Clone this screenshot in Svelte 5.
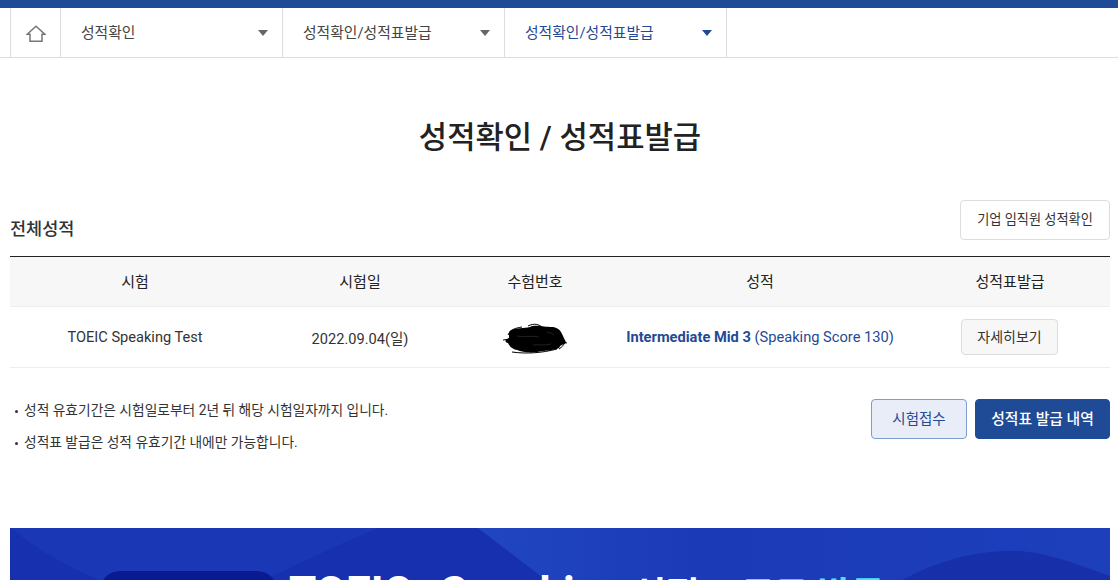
<script>
  const navItems = [
    { label: '성적확인', width: 222 },
    { label: '성적확인/성적표발급', width: 222 },
    { label: '성적확인/성적표발급', width: 223, active: true }
  ];
  const columns = ['시험', '시험일', '수험번호', '성적', '성적표발급'];
  const notes = [
    '성적 유효기간은 시험일로부터 2년 뒤 해당 시험일자까지 입니다.',
    '성적표 발급은 성적 유효기간 내에만 가능합니다.'
  ];
</script>

<div class="page">
  <div class="topbar"></div>

  <nav class="nav">
    <div class="home">
      <svg width="20" height="18" viewBox="0 0 20 18" fill="none" stroke="#777" stroke-width="1.5">
        <path d="M1.2 9.2 10 1.2l8.8 8H16v7.1H4V9.2z" />
      </svg>
    </div>
    {#each navItems as item}
      <div class="nav-item" class:active={item.active} style="width: {item.width}px">
        <span>{item.label}</span>
        <i class="caret"></i>
      </div>
    {/each}
  </nav>

  <h1>성적확인 / 성적표발급</h1>

  <div class="section-head">
    <h2>전체성적</h2>
    <button class="btn btn-outline">기업 임직원 성적확인</button>
  </div>

  <table>
    <thead>
      <tr>
        {#each columns as col}
          <th>{col}</th>
        {/each}
      </tr>
    </thead>
    <tbody>
      <tr>
        <td>TOEIC Speaking Test</td>
        <td>2022.09.04(일)</td>
        <td>
          <svg class="scribble" width="64" height="32" viewBox="0 0 64 32">
            <path d="M8 7C16 4 24 6 29 3c8-1 12 1 21 1 6 1 8 4 10 9 1 3 3 5 3 7-3 2-5 1-7 5-6 3-14 2-22 4-8 1-15 0-20-2C8 26 6 22 5 20 2 19 1 17 6 15 6 11 5 9 8 7z" fill="#000" />
            <path d="M0 17c20-3 42-4 64 3M9 29c14 2 30 1 45-3M25 3c6-3 11-2 15 2M5 12c3-6 8-7 14-8M56 26c3-2 5-4 6-7" fill="none" stroke="#000" stroke-width="1" />
            <path d="M14 13c8 2 14-1 22 1M30 22c6-1 12 1 18-1M44 9c3 1 5 1 7 3" fill="none" stroke="#2a2a2a" stroke-width="0.8" />
          </svg>
        </td>
        <td class="score"><b>Intermediate Mid 3</b> (Speaking Score 130)</td>
        <td><button class="btn btn-detail">자세히보기</button></td>
      </tr>
    </tbody>
  </table>

  <div class="foot">
    <ul>
      {#each notes as note}
        <li>{note}</li>
      {/each}
    </ul>
    <div class="actions">
      <button class="btn btn-light">시험접수</button>
      <button class="btn btn-primary">성적표 발급 내역</button>
    </div>
  </div>

  <div class="banner">
    <svg class="banner-bg" width="1100" height="52" viewBox="0 0 1100 52">
      <defs>
        <linearGradient id="sweep" x1="0" x2="1" y1="0" y2="0">
          <stop offset="0" stop-color="#2146c2" />
          <stop offset="0.35" stop-color="#1b3ab8" />
          <stop offset="1" stop-color="#1d3fbc" />
        </linearGradient>
      </defs>
      <path d="M1 0H368C320 20 285 38 258 50L250 52H90C55 38 25 20 1 0z" fill="#1a38b6" />
      <path d="M468 0 536 52H1100V0z" fill="url(#sweep)" />
      <path d="M892 52C930 32 965 23 1001 23c36 0 66 14 99 25v4z" fill="#172fa9" />
    </svg>
    <div class="banner-pill"></div>
    <div class="banner-text">
      <span class="latin">TOEIC Speaking</span>
      <span>성적표</span>
      <em>무료 발급</em>
    </div>
  </div>
</div>

<style>
  :global(body) {
    overflow: hidden;
    background: #fff;
  }
  .page {
    width: 1118px;
    height: 580px;
    overflow: hidden;
    font-family: Roboto, "Noto Sans CJK KR", sans-serif;
    color: #222;
  }
  .topbar {
    height: 8px;
    background: #1f4a96;
  }
  .nav {
    display: flex;
    height: 49px;
    padding-left: 10px;
    border-bottom: 1px solid #ddd;
  }
  .home {
    width: 50px;
    display: flex;
    align-items: center;
    justify-content: center;
    border-left: 1px solid #ddd;
    box-sizing: border-box;
    padding-top: 2px;
  }
  .nav-item {
    display: flex;
    align-items: center;
    justify-content: space-between;
    box-sizing: border-box;
    padding: 0 14px 2px 20px;
    border-left: 1px solid #ddd;
    font-size: 14.8px;
    color: #444;
  }
  .nav-item:last-child {
    border-right: 1px solid #ddd;
  }
  .nav-item.active {
    color: #1f4a96;
  }
  .caret {
    width: 0;
    height: 0;
    border-left: 5px solid transparent;
    border-right: 5px solid transparent;
    border-top: 6px solid #666;
    margin-top: 2px;
  }
  .active .caret {
    border-top-color: #1f4a96;
  }
  h1 {
    margin: 56px 0 0;
    height: 47px;
    line-height: 47px;
    text-align: center;
    font-size: 30.8px;
    font-weight: 500;
    color: #222;
    width: 1120px;
  }
  .section-head {
    display: flex;
    align-items: center;
    justify-content: space-between;
    margin: 39px 8px 0 10px;
    height: 40px;
  }
  h2 {
    margin: 14px 0 0;
    font-size: 17.5px;
    font-weight: 500;
    color: #333;
  }
  .btn {
    font-family: inherit;
    box-sizing: border-box;
    border-radius: 4px;
    cursor: pointer;
    padding: 0 0 4px;
  }
  .btn-outline {
    width: 150px;
    height: 40px;
    background: #fff;
    border: 1px solid #ddd;
    font-size: 13.2px;
    color: #333;
  }
  table {
    width: 1100px;
    margin: 16px 0 0 10px;
    border-collapse: collapse;
    table-layout: fixed;
    border-top: 1px solid #222;
  }
  th {
    height: 47px;
    padding: 0 0 2px;
    background: #f7f7f7;
    border-bottom: 1px solid #eee;
    font-size: 15px;
    font-weight: 400;
    color: #222;
  }
  th:nth-child(1) { width: 250px; }
  th:nth-child(2) { width: 200px; }
  th:nth-child(3) { width: 150px; }
  th:nth-child(4) { width: 300px; }
  td {
    height: 60px;
    padding: 0;
    text-align: center;
    font-size: 14.6px;
    color: #333;
    border-bottom: 1px solid #eee;
  }
  .scribble {
    display: block;
    margin: 3px auto 0;
  }
  .score {
    color: #1f4a96;
    font-size: 14.65px;
  }
  .score b {
    font-weight: 700;
  }
  .btn-detail {
    width: 97px;
    height: 36px;
    background: #f7f7f7;
    border: 1px solid #ddd;
    font-size: 14px;
    color: #333;
    display: block;
    margin: 0 0 0 51px;
    padding-bottom: 2px;
  }
  .foot {
    display: flex;
    justify-content: space-between;
    align-items: flex-start;
    margin: 31px 8px 0 10px;
  }
  ul {
    list-style: none;
    margin: 0;
    padding: 0;
    font-size: 13.75px;
    color: #333;
  }
  li {
    height: 32px;
    line-height: 23px;
    padding-left: 14px;
    position: relative;
  }
  li::before {
    content: '';
    position: absolute;
    left: 5px;
    top: 11px;
    width: 3px;
    height: 3px;
    border-radius: 50%;
    background: #333;
  }
  .actions {
    display: flex;
    gap: 8px;
  }
  .btn-light {
    width: 96px;
    height: 40px;
    background: #e9edf7;
    border: 1px solid #7f9ccf;
    color: #1f4a96;
    font-size: 14.5px;
  }
  .btn-primary {
    width: 135px;
    height: 40px;
    background: #1f4a96;
    border: 1px solid #1f4a96;
    color: #fff;
    font-size: 14.8px;
    font-weight: 500;
  }
  .banner {
    position: relative;
    margin: 65px 8px 0 10px;
    height: 120px;
    background: #1630b0;
    overflow: hidden;
  }
  .banner-bg {
    position: absolute;
    left: 0;
    top: 0;
  }
  .banner-pill {
    position: absolute;
    left: 90px;
    top: 43px;
    width: 177px;
    height: 60px;
    border-radius: 20px;
    background: #0a1a90;
  }
  .banner-text {
    position: absolute;
    left: 279px;
    top: 35px;
    display: flex;
    align-items: baseline;
    gap: 8px;
    font-size: 36.5px;
    font-weight: 700;
    line-height: 60px;
    color: #fff;
    white-space: nowrap;
  }
  .latin {
    font-size: 44px;
    word-spacing: 17px;
  }
  .banner-text em {
    font-style: normal;
    color: #4fe3ff;
  }
</style>
